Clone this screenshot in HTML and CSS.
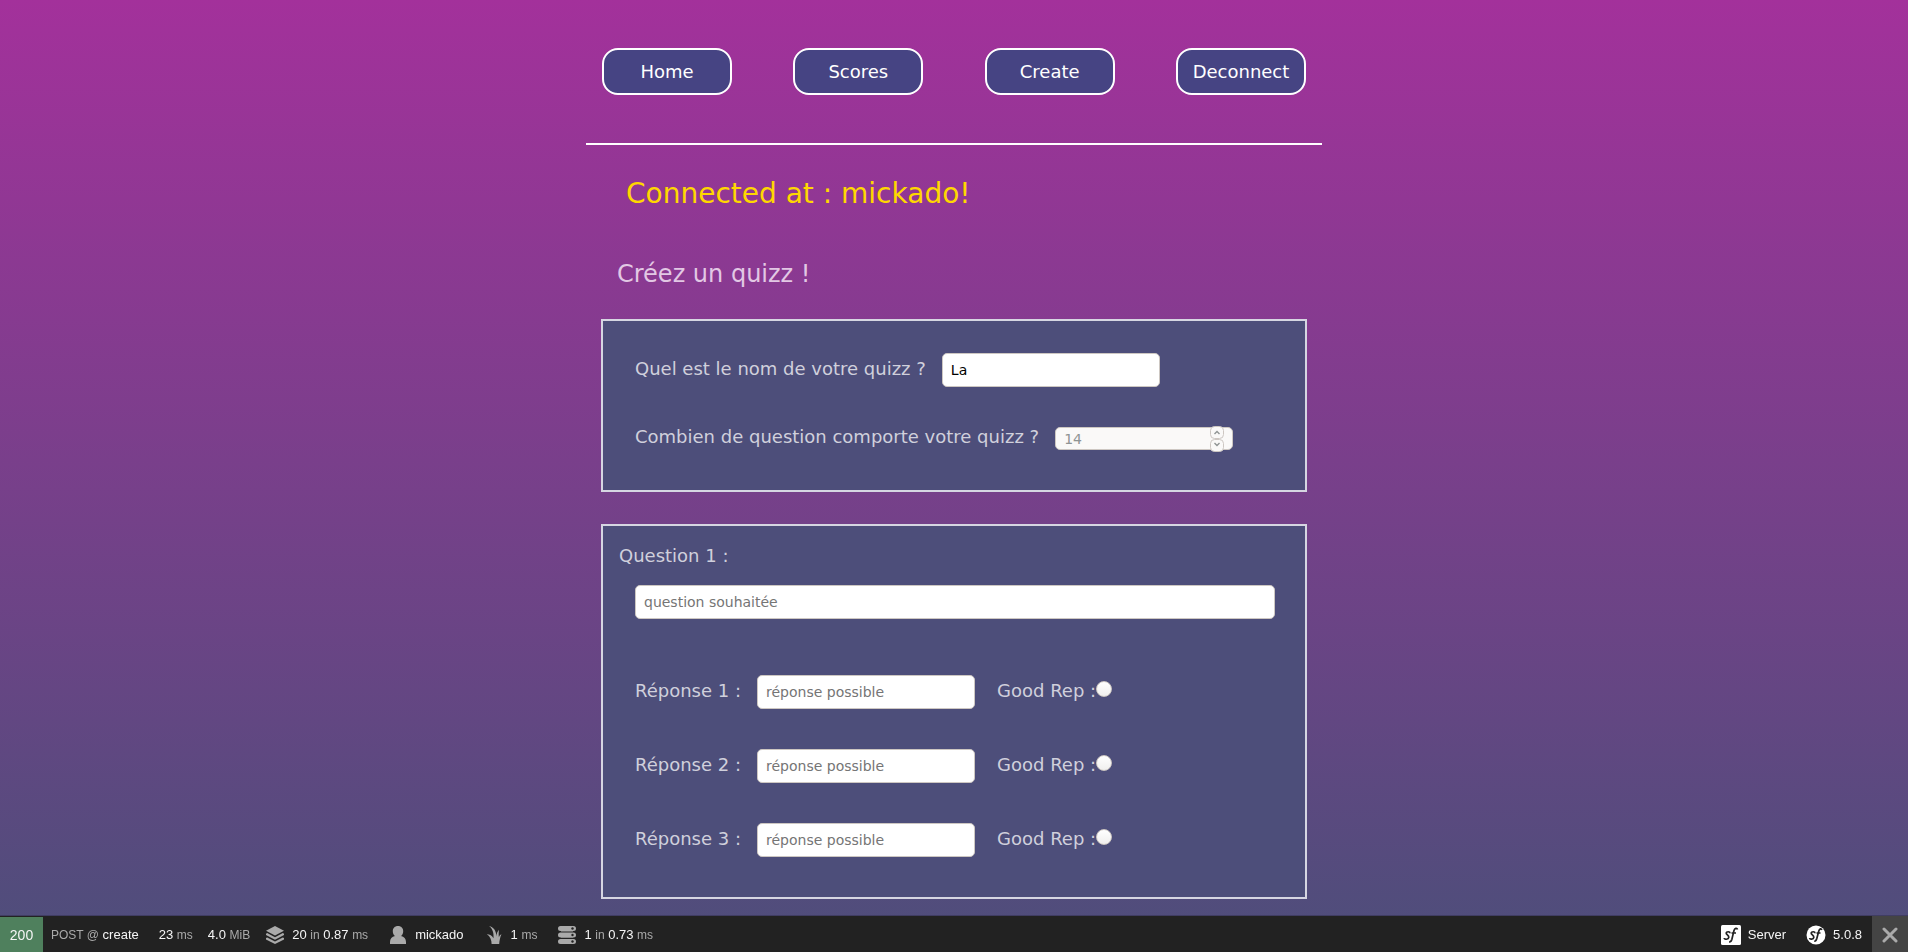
FILE: index.html
```html
<!DOCTYPE html>
<html lang="fr">
<head>
<meta charset="utf-8">
<title>Créez un quizz</title>
<link rel="stylesheet" href="styles.css">
</head>
<body>
<div class="page">
  <nav class="nav">
    <a class="nav-link" href="#">Home</a>
    <a class="nav-link" href="#">Scores</a>
    <a class="nav-link" href="#">Create</a>
    <a class="nav-link" href="#">Deconnect</a>
  </nav>
  <main class="content">
    <p class="connected">Connected at : mickado!</p>
    <h1 class="title">Créez un quizz !</h1>
    <form class="quiz">
      <section class="card card-settings">
        <div class="row">
          <label class="label" for="name">Quel est le nom de votre quizz ?</label>
          <input class="field" id="name" type="text" value="La">
        </div>
        <div class="row row-count">
          <label class="label" for="count">Combien de question comporte votre quizz ?</label>
          <span class="stepper">
            <input class="field field-number" id="count" type="number" value="14" disabled>
            <span class="spin">
              <svg class="spin-part" viewBox="0 0 14 13"><rect x=".5" y=".5" width="13" height="12" rx="4"/><path d="M4.500 8 7 5.500 9.500 8"/></svg>
              <svg class="spin-part" viewBox="0 0 14 13"><rect x=".5" y=".5" width="13" height="12" rx="4"/><path d="M4.500 4 7 6.500 9.500 4"/></svg>
            </span>
          </span>
        </div>
      </section>
      <section class="card card-question">
        <label class="label question-label" for="question">Question 1 :</label>
        <input class="field field-wide" id="question" type="text" placeholder="question souhaitée">
        <div class="answers">
          <div class="row">
            <label class="label" for="a1">Réponse 1 :</label>
            <input class="field" id="a1" type="text" placeholder="réponse possible">
            <label class="label good" for="g1">Good Rep :</label><input class="radio" id="g1" type="radio" name="good">
          </div>
          <div class="row">
            <label class="label" for="a2">Réponse 2 :</label>
            <input class="field" id="a2" type="text" placeholder="réponse possible">
            <label class="label good" for="g2">Good Rep :</label><input class="radio" id="g2" type="radio" name="good">
          </div>
          <div class="row">
            <label class="label" for="a3">Réponse 3 :</label>
            <input class="field" id="a3" type="text" placeholder="réponse possible">
            <label class="label good" for="g3">Good Rep :</label><input class="radio" id="g3" type="radio" name="good">
          </div>
        </div>
      </section>
    </form>
  </main>
</div>
<footer class="toolbar">
  <span class="status">200</span>
  <span class="block block-route"><span><i>POST @</i> create</span></span>
  <span class="block"><span>23 <i>ms</i></span></span>
  <span class="block block-memory"><span>4.0 <i>MiB</i></span></span>
  <span class="block"><svg class="icon" viewBox="0 0 20 20"><path d="M10 1 1 5.700l9 4.800 9-4.800z"/><path d="M1 8.700v1.400l9 4.700 9-4.700V8.700l-1.200-.6L10 12.200 2.200 8.100z"/><path d="M1 13v1.400l9 4.700 9-4.700V13l-1.200-.6L10 16.500l-7.800-4.100z"/></svg><span>20 <i>in</i> 0.87 <i>ms</i></span></span>
  <span class="block"><svg class="icon" viewBox="0 0 20 20"><path d="M10 1c3.200 0 5.200 2.200 5.200 5.200 0 2-.8 3.800-2.200 4.900 3.100.8 5 2.800 5 5.900v2H2v-2c0-3.100 1.900-5.100 5-5.900-1.400-1.100-2.200-2.900-2.200-4.900C4.800 3.200 6.800 1 10 1z"/></svg><span>mickado</span></span>
  <span class="block"><svg class="icon" viewBox="0 0 20 20"><path d="M5 1c4.500.8 7 4.700 7.500 10.200.2-2.700.9-4.600 2.500-6.400-.4 2.800-.4 4.800-.1 7.400.5-1.600 1.200-2.400 2.600-3-1.300 2.700-2 5.800-2.300 9.800H7.600c.1-4-1.400-7.700-4.800-9.800 3 .1 5.300 1.400 6.700 4C9.900 8 8.700 3.800 5 1z"/></svg><span>1 <i>ms</i></span></span>
  <span class="block"><svg class="icon" viewBox="0 0 20 20"><path d="M3.500 1h13a2.500 2.500 0 0 1 0 5h-13a2.500 2.500 0 0 1 0-5zM3.500 7.500h13a2.500 2.500 0 0 1 0 5h-13a2.500 2.500 0 0 1 0-5zM3.500 14h13a2.500 2.500 0 0 1 0 5h-13a2.500 2.500 0 0 1 0-5z"/><path d="M4 6h12v.5H4zM4 12.500h12v.6H4z"/><g class="dot"><circle cx="15.500" cy="3.500" r="1.200"/><circle cx="15.500" cy="10" r="1.200"/><circle cx="15.500" cy="16.500" r="1.200"/></g></svg><span>1 <i>in</i> 0.73 <i>ms</i></span></span>
  <span class="block block-server"><svg class="icon logo" viewBox="0 0 20 20"><rect width="20" height="20" rx="1.500"/><path class="mark" d="M9 8.200C9 6.300 5.500 6.300 5.200 8c-.2 1.600 2.800 2.300 2.600 4.300-.3 2.300-4.400 2.600-4.600.7M16.500 4.500c-.5-1.800-2.800-1.500-3.600 1.200l-2 8.500c-.6 2-1.500 2.800-2.800 2.600M10.500 8h4.500"/></svg><span>Server</span></span>
  <span class="block"><svg class="icon logo" viewBox="0 0 20 20"><circle cx="10" cy="10" r="9.500"/><path class="mark" d="M9 8.200C9 6.300 5.500 6.300 5.200 8c-.2 1.600 2.800 2.300 2.600 4.300-.3 2.300-4 2.400-4.200.7M15.800 5c-.5-1.800-2.300-1.500-3 1l-2 7.500c-.6 2-1.400 2.800-2.500 2.600M10.500 8h4"/></svg><span>5.0.8</span></span>
  <button class="close" type="button" aria-label="Close Toolbar"><svg class="cross" viewBox="0 0 16 16"><path d="m2 2 12 12M14 2 2 14"/></svg></button>
</footer>
</body>
</html>
```
FILE: styles.css
```css
* {
  box-sizing: border-box;
}

body {
  margin: 0;
  min-height: 100vh;
  font: 18px/22px "DejaVu Sans", sans-serif;
  color: #d0d0dc;
  background: linear-gradient(#a3319b, #4d4e7a);
}

.page {
  max-width: 736px;
  margin: 0 auto;
  padding-bottom: 53px;
}

.nav {
  display: flex;
  justify-content: space-between;
  padding: 48px 16px;
  border-bottom: 2px solid #fff;
}

.nav-link {
  display: flex;
  align-items: center;
  justify-content: center;
  width: 130px;
  height: 47px;
  border: 2px solid #fff;
  border-radius: 16px;
  background: #464483;
  color: #fff;
  text-decoration: none;
}

.content {
  padding: 0 15px;
}

.connected {
  margin: 33px 25px 0;
  font-size: 28px;
  line-height: 32px;
  color: #ffd700;
}

.title {
  margin: 48px 16px 29px;
  font-size: 24px;
  font-weight: 400;
  line-height: 32px;
  color: #e2c8e4;
}

.card {
  border: 2px solid #d6d6e2;
  background: #4d4e7a;
}

.card-settings {
  margin-bottom: 32px;
  padding: 32px;
}

.card-question {
  padding: 16px 30px 40px 32px;
}

.row {
  display: flex;
  align-items: center;
  min-height: 34px;
}

.row-count {
  margin-top: 34px;
  margin-bottom: 3px;
}

.label {
  margin-right: 16px;
  padding-bottom: 2px;
  color: #d0d0dc;
}

.field {
  width: 218px;
  height: 34px;
  padding: 0 8px;
  border: 1px solid #cdc7c2;
  border-radius: 5px;
  background: #fff;
  font: 14px "DejaVu Sans", sans-serif;
  color: #000;
}

.field::placeholder {
  color: #757575;
}

.stepper {
  position: relative;
  display: flex;
  padding-top: 1px;
}

.field-number {
  width: 178px;
  height: 23px;
  background: #faf9f8;
  color: #8f9494;
  appearance: textfield;
}

.spin {
  position: absolute;
  top: 0;
  right: 9px;
  display: flex;
  flex-direction: column;
}

.spin-part {
  width: 14px;
  height: 13px;
  fill: #faf9f8;
  stroke: #cdc7c2;
}

.spin-part path {
  fill: none;
  stroke: #8f9494;
  stroke-width: 1.4;
}

.question-label {
  display: block;
  margin: 3px 0 16px -16px;
}

.field-wide {
  display: block;
  width: 100%;
}

.answers {
  display: grid;
  gap: 40px;
  margin-top: 56px;
}

.good {
  margin: 0 0 0 22px;
}

.radio {
  width: 16px;
  height: 16px;
  margin: 0 0 6px;
  border: 1px solid #cdc7c2;
  border-radius: 50%;
  background: linear-gradient(#fff, #f0efee);
  appearance: none;
}

.toolbar {
  position: fixed;
  right: 0;
  bottom: 0;
  left: 0;
  display: flex;
  height: 36px;
  background: #222;
  box-shadow: 0 -1px 0 rgba(0, 0, 0, 0.2);
  font: 13px/34px "Liberation Sans", Arial, sans-serif;
  color: #f5f5f5;
}

.toolbar i {
  font-size: 12px;
  font-style: normal;
  color: #aaa;
}

.status {
  width: 43px;
  padding-top: 1px;
  border-top: 1px solid #222;
  background: #4f805d;
  font-size: 14px;
  text-align: center;
}

.block {
  display: flex;
  gap: 7px;
  align-items: center;
  padding: 2px 10px 0;
  white-space: nowrap;
}

.block-route {
  padding-left: 8px;
}

.block-memory {
  padding-right: 5px;
  padding-left: 5px;
}

.icon {
  width: 20px;
  height: 20px;
  fill: #aaa;
}

.dot {
  fill: #222;
}

.logo {
  fill: #fff;
}

.mark {
  fill: none;
  stroke: #222;
  stroke-width: 1.7;
}

.block-server {
  margin-left: auto;
}

.close {
  display: flex;
  align-items: center;
  justify-content: center;
  width: 36px;
  padding: 2px 0 0;
  border: 0;
  background: #444;
}

.cross {
  width: 16px;
  height: 16px;
  fill: none;
  stroke: #aaa;
  stroke-linecap: round;
  stroke-width: 3;
}
```
